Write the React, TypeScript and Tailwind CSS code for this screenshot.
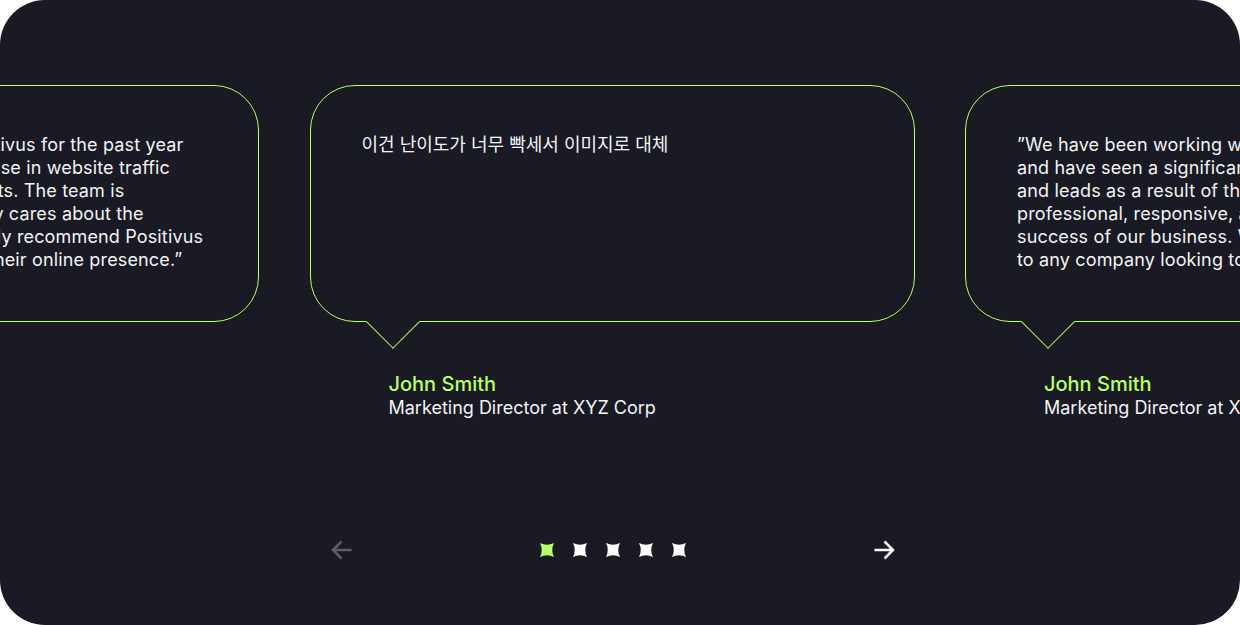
import React from "react";

const lines = [
  "\u201DWe have been working with Positivus for the past year",
  "and have seen a significant increase in website traffic",
  "and leads as a result of their efforts. The team is",
  "professional, responsive, and truly cares about the",
  "success of our business. We highly recommend Positivus",
  "to any company looking to grow their online presence.\u201D",
];

const slides = [
  { korean: false },
  { korean: true },
  { korean: false },
];

function Star({ active }: { active: boolean }) {
  return (
    <svg width="14" height="14" viewBox="0 0 14 14">
      <path
        d="M0 0 Q7 3.5 14 0 Q10.5 7 14 14 Q7 10.5 0 14 Q3.5 7 0 0 Z"
        fill={active ? "#B9FF66" : "#FFFFFF"}
      />
    </svg>
  );
}

function Arrow({ dir, color }: { dir: "left" | "right"; color: string }) {
  const d = dir === "left" ? "M21 11 H3 M11 2.5 L2.5 11 L11 19.5" : "M1 11 H19 M11 2.5 L19.5 11 L11 19.5";
  return (
    <svg width="23" height="22" viewBox="0 0 22 22" fill="none">
      <path d={d} stroke={color} strokeWidth="2.5" />
    </svg>
  );
}

function Bubble({ korean }: { korean: boolean }) {
  return (
    <div className="w-[605px] shrink-0">
      <div className="relative h-[237px] rounded-[45px] border border-[#B9FF66] pl-[51px] pt-[47px]">
        {korean ? (
          <p className="text-[18px] leading-[23px] text-[#F3F3F3]">이건 난이도가 너무 빡세서 이미지로 대체</p>
        ) : (
          <p className="whitespace-nowrap text-[18px] leading-[23px] tracking-[0.15px] text-[#F3F3F3]">
            {lines.map((l) => (
              <span key={l} className="block">
                {l}
              </span>
            ))}
          </p>
        )}
        <div className="absolute -bottom-[20px] left-[63px] h-[38px] w-[38px] rotate-45 border-r border-b border-[#B9FF66] bg-[#191A23]" />
      </div>
      <div className="mt-[50px] pl-[79px]">
        <p className="text-[20px] font-medium leading-[24px] text-[#B9FF66]">John Smith</p>
        <p className="text-[18px] leading-[24px] text-[#F3F3F3]">Marketing Director at XYZ Corp</p>
      </div>
    </div>
  );
}

export default function App() {
  return (
    <div className="bg-white">
      <div
        className="h-[625px] w-[1240px] overflow-hidden rounded-[45px] bg-[#191A23] pt-[85px]"
        style={{ fontFamily: "Inter, 'Noto Sans CJK KR', sans-serif" }}
      >
        <div className="ml-[-346px] flex gap-[50.5px]">
          {slides.map((s, i) => (
            <Bubble key={i} korean={s.korean} />
          ))}
        </div>
        <div className="ml-[330px] mt-[119px] flex w-[566px] items-center justify-between">
          <Arrow dir="left" color="#5D5E65" />
          <div className="flex gap-[19px]">
            {[0, 1, 2, 3, 4].map((i) => (
              <Star key={i} active={i === 0} />
            ))}
          </div>
          <Arrow dir="right" color="#FFFFFF" />
        </div>
      </div>
    </div>
  );
}
